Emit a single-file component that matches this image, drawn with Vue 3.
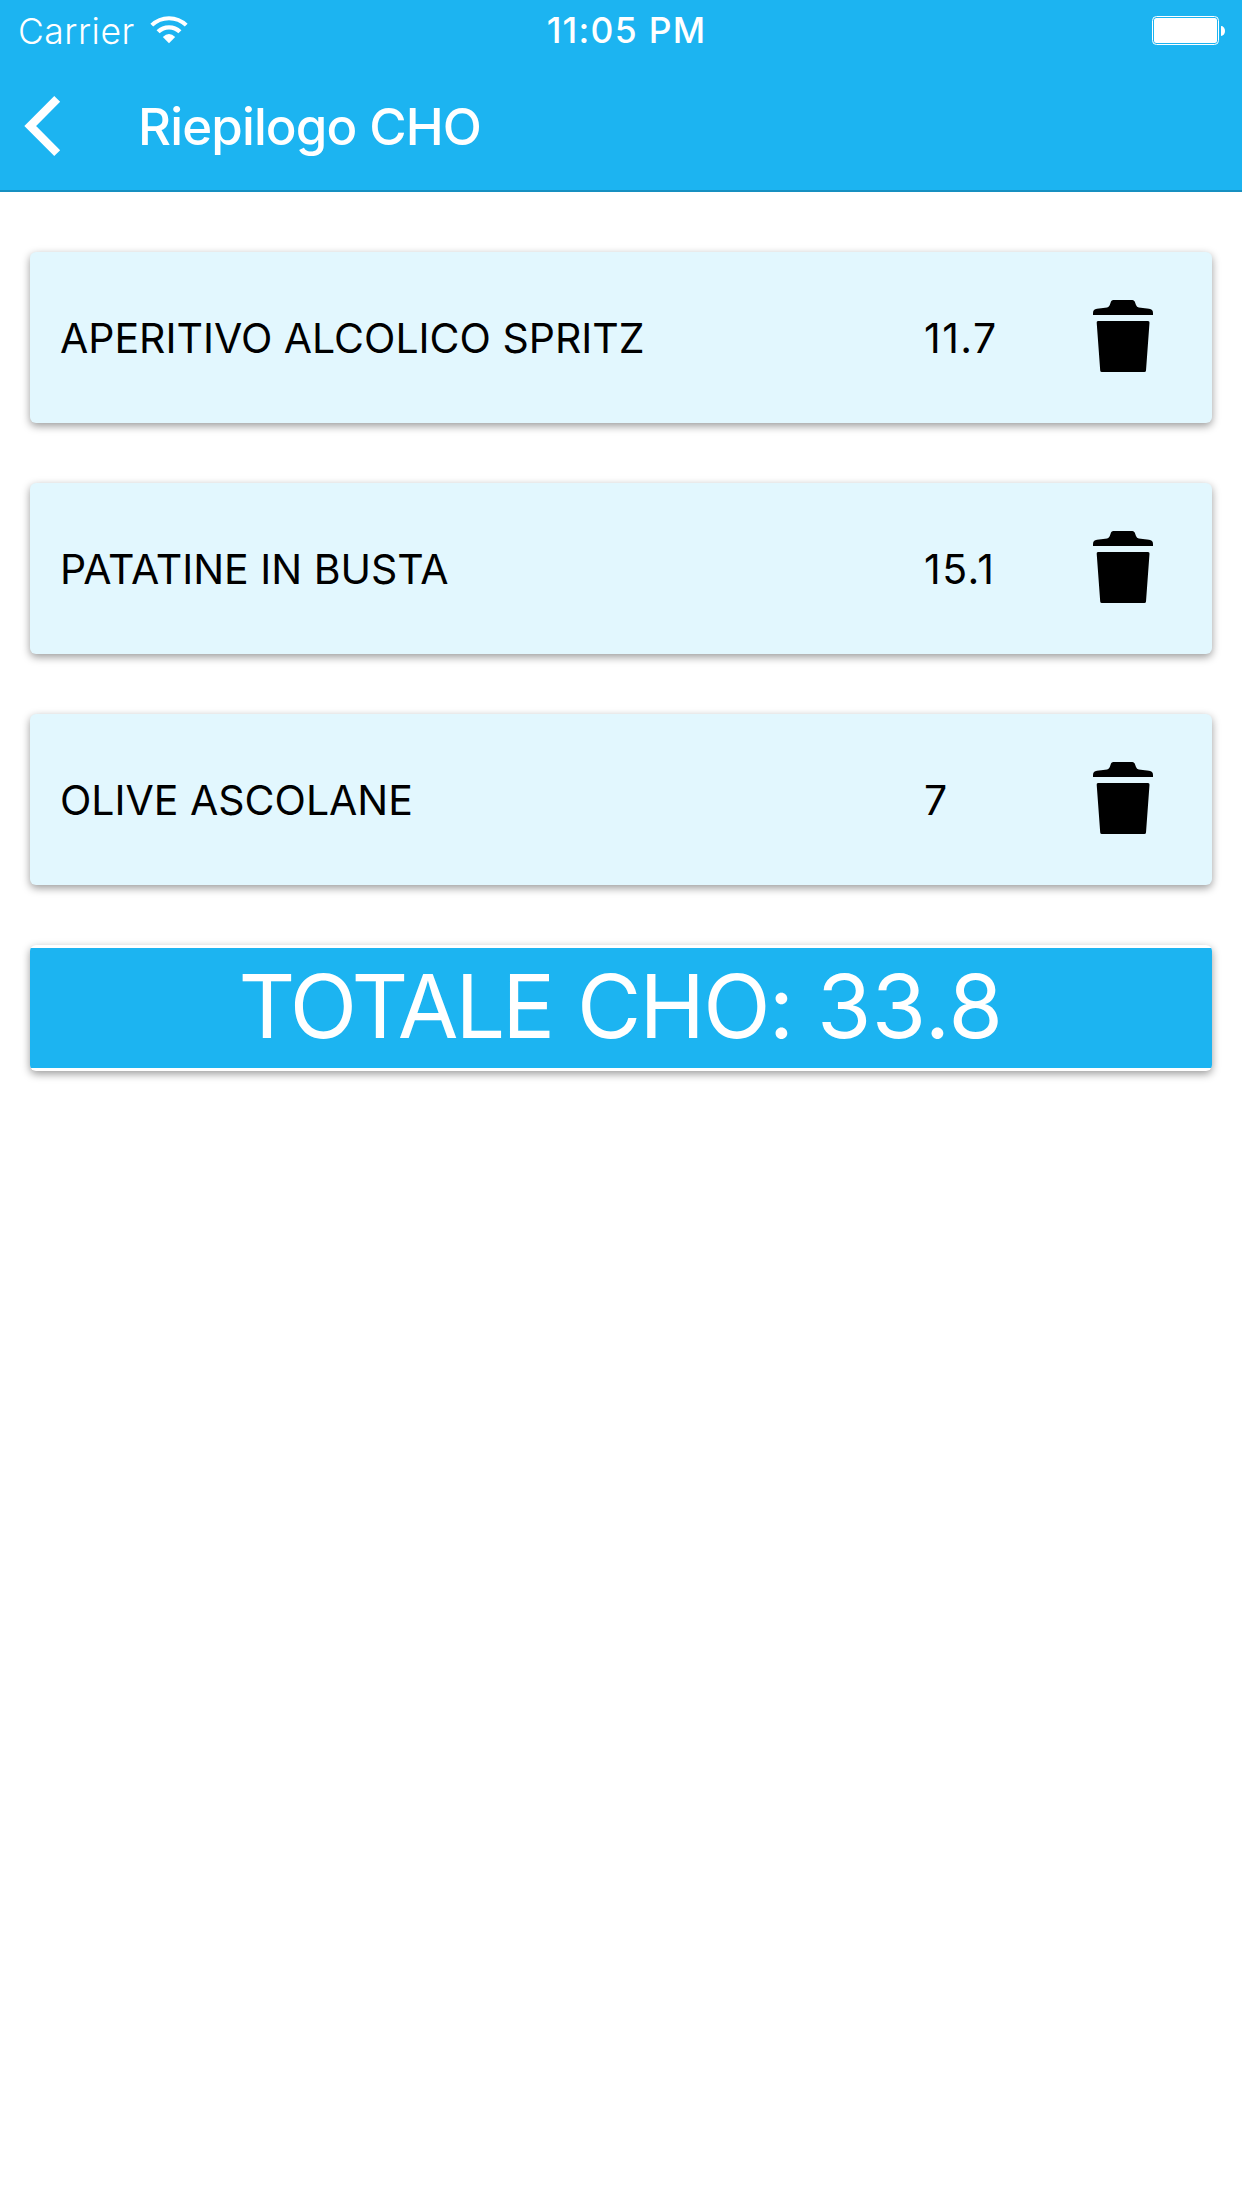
<script setup>
const items = [
  { name: 'APERITIVO ALCOLICO SPRITZ', cho: '11.7' },
  { name: 'PATATINE IN BUSTA', cho: '15.1' },
  { name: 'OLIVE ASCOLANE', cho: '7' },
]
const total = '33.8'
</script>

<template>
  <div class="screen">
    <header class="header">
      <div class="status">
        <div class="network">
          <span class="carrier">Carrier</span>
          <svg class="wifi" viewBox="0 0 38 28" width="38" height="28">
            <path d="M1.8 9.2 A24.5 24.5 0 0 1 36.2 9.2" fill="none" stroke="#fff" stroke-width="4" />
            <path d="M8.1 15.8 A15.6 15.6 0 0 1 29.9 15.8" fill="none" stroke="#fff" stroke-width="4.4" />
            <path d="M12.8 20.9 Q19 15.1 25.2 20.9 L19 27.2 Z" fill="#fff" />
          </svg>
        </div>
        <span class="time">11:05 PM</span>
        <svg class="battery" viewBox="0 0 74 30" width="74" height="30">
          <rect x="0.5" y="0.5" width="66" height="28" rx="4" fill="none" stroke="#fff" />
          <rect x="2" y="2" width="63" height="25" rx="2.5" fill="#fff" />
          <path d="M69 10 a4 5 0 0 1 0 10 z" fill="#fff" />
        </svg>
      </div>
      <nav class="navbar">
        <svg class="back" viewBox="0 0 38 62" width="38" height="62">
          <path d="M33.2 3.9 L6.2 31 L33.2 58.1" fill="none" stroke="#fff" stroke-width="8.3" />
        </svg>
        <h1 class="title">Riepilogo CHO</h1>
      </nav>
    </header>

    <main class="content">
      <section v-for="item in items" :key="item.name" class="card item">
        <span class="name">{{ item.name }}</span>
        <span class="cho">{{ item.cho }}</span>
        <svg class="trash" viewBox="0 0 60 72" width="60" height="72">
          <path d="M0 15 V13 Q0 9.3 4 8.8 L14.2 7.4 Q16.2 7 16.8 5 L18 1.6 Q18.6 0 20.2 0 H39.4 Q41 0 41.7 1.6 L43 5 Q43.8 7.1 45.8 7.4 L56 8.8 Q60 9.3 60 13 V15 Z" />
          <path d="M5 21 H55 Q56.7 21 56.5 22.8 L53 70.5 Q52.9 72 51.3 72 H8.9 Q7.3 72 7.2 70.5 L3.7 22.8 Q3.5 21 5 21 Z" />
        </svg>
      </section>
      <section class="card total">
        <div class="total-bar">
          <span class="total-word">TOTALE</span> <span class="total-unit">CHO:</span> <span class="total-value">{{ total }}</span>
        </div>
      </section>
    </main>
  </div>
</template>

<style>
body {
  margin: 0;
  background: #fff;
}
</style>

<style scoped>
.screen {
  width: 1242px;
  height: 2208px;
  overflow: hidden;
  background: #fff;
  color: #000;
  font-family: Inter, Roboto, sans-serif;
}
.header {
  box-sizing: border-box;
  height: 192px;
  background: #1cb4f1;
  border-bottom: 2px solid #1690c1;
  color: #fff;
}
.status {
  box-sizing: border-box;
  display: grid;
  grid-template-columns: 1fr auto 1fr;
  height: 60px;
  padding: 0 16px 0 18px;
  line-height: 62px;
}
.network {
  display: flex;
  align-items: flex-start;
}
.carrier {
  width: 132px;
  padding-top: 1px;
  font-size: 35.5px;
  font-weight: 320;
  letter-spacing: 0.5px;
  white-space: nowrap;
}
.wifi {
  margin-top: 16px;
}
.time {
  margin-left: 9px;
  font-size: 35.5px;
  font-weight: 550;
  letter-spacing: 1.25px;
}
.battery {
  justify-self: end;
  margin-top: 16px;
}
.navbar {
  display: flex;
  align-items: center;
  height: 132px;
  padding-left: 24px;
}
.back {
  flex: none;
}
.title {
  margin: 0 0 0 76px;
  padding-top: 1px;
  font-size: 51px;
  font-weight: 500;
  line-height: 60px;
  letter-spacing: -0.87px;
}
.content {
  display: flex;
  flex-direction: column;
  gap: 60px;
  padding: 60px 30px;
}
.card {
  overflow: hidden;
  border-radius: 6px;
  box-shadow: 0 3px 9px rgba(0, 0, 0, 0.4);
}
.item {
  display: grid;
  grid-template-columns: 864px 169px 60px;
  align-items: center;
  box-sizing: border-box;
  height: 171px;
  padding: 0 0 3px 30px;
  background: #e2f7fe;
  font-size: 41px;
  line-height: 50px;
}
.name,
.cho {
  padding-top: 3px;
  white-space: nowrap;
}
.cho {
  letter-spacing: 1.5px;
}
.total {
  padding: 3px 0;
  background: #fff;
}
.total-bar {
  height: 120px;
  background: #1cb4f1;
  color: #fff;
  font-size: 88px;
  line-height: 117px;
  text-align: center;
  white-space: nowrap;
}
.total-word {
  letter-spacing: -2.95px;
}
.total-unit {
  letter-spacing: -1.8px;
}
.total-value {
  letter-spacing: 0.5px;
}
</style>
